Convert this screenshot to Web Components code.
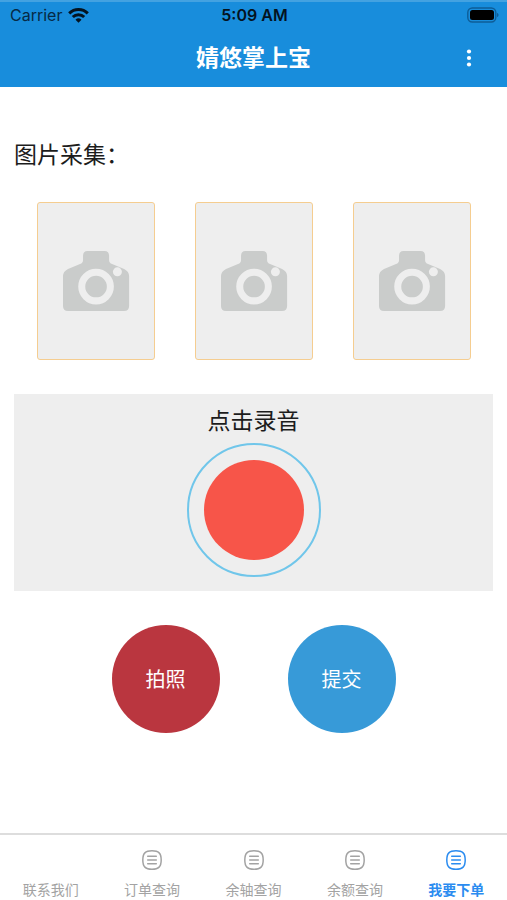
<!DOCTYPE html>
<html lang="zh-CN">
<head>
<meta charset="utf-8">
<meta name="viewport" content="width=device-width, initial-scale=1">
<title>婧悠掌上宝</title>
<style>
  html, body { margin: 0; height: 100%; }
  body { background: #fff; color: #1c1c1c; font-family: "Liberation Sans", "Noto Sans CJK SC", sans-serif; }
</style>
</head>
<body>
<order-app></order-app>
<script>
  function define(name, markup, setup) {
    const template = document.createElement('template');
    template.innerHTML = markup;
    customElements.define(name, class extends HTMLElement {
      constructor() {
        super();
        this.attachShadow({ mode: 'open' }).append(template.content.cloneNode(true));
      }
      connectedCallback() {
        if (setup) setup(this, this.shadowRoot);
      }
    });
  }

  define('status-bar', `
    <style>
      :host { display: grid; grid-template-columns: 1fr auto 1fr; align-items: center; height: 30px; padding: 0 8px 0 10px;
        box-sizing: border-box; font: 16px/20px Inter, "Liberation Sans", sans-serif; color: #062a45; }
      .carrier { display: flex; align-items: center; gap: 6px; }
      time { font-weight: 600; color: #04131f; }
      svg { display: block; }
      .battery { justify-self: end; }
    </style>
    <span class="carrier"><span>Carrier</span>
      <svg width="21" height="15" viewBox="0 0 21 15" fill="none" stroke="#04131f" stroke-width="3" aria-hidden="true">
        <path d="M1.2 5.4a13.2 13.2 0 0 1 18.6 0"/>
        <path d="M4.8 9a8.1 8.1 0 0 1 11.4 0"/>
        <path d="M10.5 14.7 7.5 11.7a4.3 4.3 0 0 1 6 0z" fill="#04131f" stroke="none"/>
      </svg>
    </span>
    <time>5:09 AM</time>
    <svg class="battery" width="32" height="16" viewBox="0 0 32 16" aria-hidden="true">
      <rect x=".8" y="1" width="28" height="14" rx="4.5" fill="none" stroke="#0e5d97" stroke-width="1.4"/>
      <rect x="3" y="3" width="24" height="10" rx="2.5" fill="#000"/>
      <path d="M30 6c2 .5 2 3.500 0 4z" fill="#0e5d97"/>
    </svg>`);

  define('app-header', `
    <style>
      :host { display: block; flex: none; background: #188ddc; border-top: 2px solid #43a2e1; }
      status-bar { margin-top: -2px; }
      .bar { display: grid; grid-template-columns: 1fr auto 1fr; align-items: center; height: 55px; padding: 0 26px 2px; }
      h1 { grid-column: 2; margin: 0; font-size: 23px; line-height: 34px; font-weight: 700; color: #fff; }
      button { justify-self: end; width: 24px; height: 32px; margin: 0; padding: 0; border: 0; background: none; }
      svg { display: block; margin: auto; }
    </style>
    <status-bar></status-bar>
    <div class="bar">
      <h1><slot></slot></h1>
      <button type="button" aria-label="更多">
        <svg width="6" height="18" viewBox="0 0 6 18" fill="#fff" aria-hidden="true">
          <circle cx="3" cy="2.500" r="2.1"/><circle cx="3" cy="9" r="2.1"/><circle cx="3" cy="15.500" r="2.1"/>
        </svg>
      </button>
    </div>`);

  define('photo-slot', `
    <style>
      :host { display: block; }
      button { display: grid; place-items: center; width: 100%; aspect-ratio: 118 / 158; box-sizing: border-box; margin: 0; padding: 0;
        border: 1px solid #f5cd90; border-radius: 3px; background: #eee; }
      svg { display: block; width: 57%; height: auto; overflow: visible; }
    </style>
    <button type="button" aria-label="添加图片">
      <svg viewBox="0 0 66 60" aria-hidden="true">
        <path fill="#cacccb" d="M24.500 0h17Q46 0 46 5v4q0 3 3 4l12 5q5 2.500 5 7v30q0 5-5 5H5q-5 0-5-5V25q0-4.500 5-7l12-5q3-1 3-4V5q0-5 4.500-5z"/>
        <circle cx="33" cy="35.500" r="14.300" fill="#cacccb" stroke="#eee" stroke-width="7"/>
        <circle cx="54.300" cy="20.800" r="4.500" fill="#eee"/>
      </svg>
    </button>`);

  define('voice-recorder', `
    <style>
      :host { display: flex; flex-direction: column; align-items: center; background: #eee; padding: 10px 0 14px; }
      label { font-size: 23px; line-height: 34px; margin-bottom: 5px; }
      button { width: 134px; height: 134px; box-sizing: border-box; margin: 0; padding: 15px; border: 2px solid #70c6ea; border-radius: 50%;
        background: transparent; }
      button span { display: block; height: 100%; border-radius: 50%; background: #f75549; }
    </style>
    <label for="record"><slot></slot></label>
    <button id="record" type="button"><span></span></button>`);

  define('round-button', `
    <style>
      :host { display: block; }
      button { width: 108px; height: 108px; margin: 0; padding: 2px 0 0; border: 0; border-radius: 50%; background: var(--fill);
        color: #fff; font: inherit; font-size: 20px; line-height: 30px; }
    </style>
    <button type="button"><slot></slot></button>`);

  define('tab-item', `
    <style>
      :host { display: block; flex: 1 1 0; min-width: 0; color: #a3a3a3; }
      :host([active]) { color: #2b8cf0; font-weight: 700; }
      a { display: flex; flex-direction: column; align-items: center; gap: 10px; padding: 15px 0 0; color: inherit; text-decoration: none;
        font-size: 14px; line-height: 20px; white-space: nowrap; }
      svg { display: block; }
      :host([no-icon]) svg { visibility: hidden; }
    </style>
    <a href="#">
      <svg width="20" height="20" viewBox="0 0 20 20" fill="none" stroke="currentColor" aria-hidden="true">
        <path stroke-width="1.500" d="M10 .8c6.700 0 9.200 2.500 9.200 9.200s-2.500 9.200-9.200 9.200S.8 16.700.8 10 3.300.8 10 .8z"/>
        <path stroke-width="1.500" stroke-linecap="round" d="M5.700 6.300h8.600M5.700 10h8.600M5.700 13.700h8.600"/>
      </svg>
      <span><slot></slot></span>
    </a>`,
    (host, root) => {
      if (host.hasAttribute('active')) root.querySelector('a').setAttribute('aria-current', 'page');
    });

  define('tab-bar', `
    <style>
      :host { display: block; flex: none; border-top: 2px solid #ddd; background: #fff; }
      nav { display: flex; min-height: 65px; }
    </style>
    <nav><slot></slot></nav>`);

  define('order-app', `
    <style>
      :host { display: flex; flex-direction: column; min-height: 100vh; }
      main { flex: 1; }
      h2 { margin: 51px 14px 30px; font-size: 23px; line-height: 34px; font-weight: 400; }
      .photos { display: grid; grid-template-columns: repeat(3, 1fr); gap: 40px; padding: 0 36px 0 37px; }
      voice-recorder { margin: 34px 14px; }
      .actions { display: flex; justify-content: center; gap: 68px; }
      .shoot { --fill: #ba363f; }
      .submit { --fill: #379ad8; }
    </style>
    <app-header>婧悠掌上宝</app-header>
    <main>
      <h2>图片采集：</h2>
      <div class="photos"><photo-slot></photo-slot><photo-slot></photo-slot><photo-slot></photo-slot></div>
      <voice-recorder>点击录音</voice-recorder>
      <div class="actions">
        <round-button class="shoot">拍照</round-button>
        <round-button class="submit">提交</round-button>
      </div>
    </main>
    <tab-bar>
      <tab-item no-icon>联系我们</tab-item>
      <tab-item>订单查询</tab-item>
      <tab-item>余轴查询</tab-item>
      <tab-item>余额查询</tab-item>
      <tab-item active>我要下单</tab-item>
    </tab-bar>`);
</script>
</body>
</html>
